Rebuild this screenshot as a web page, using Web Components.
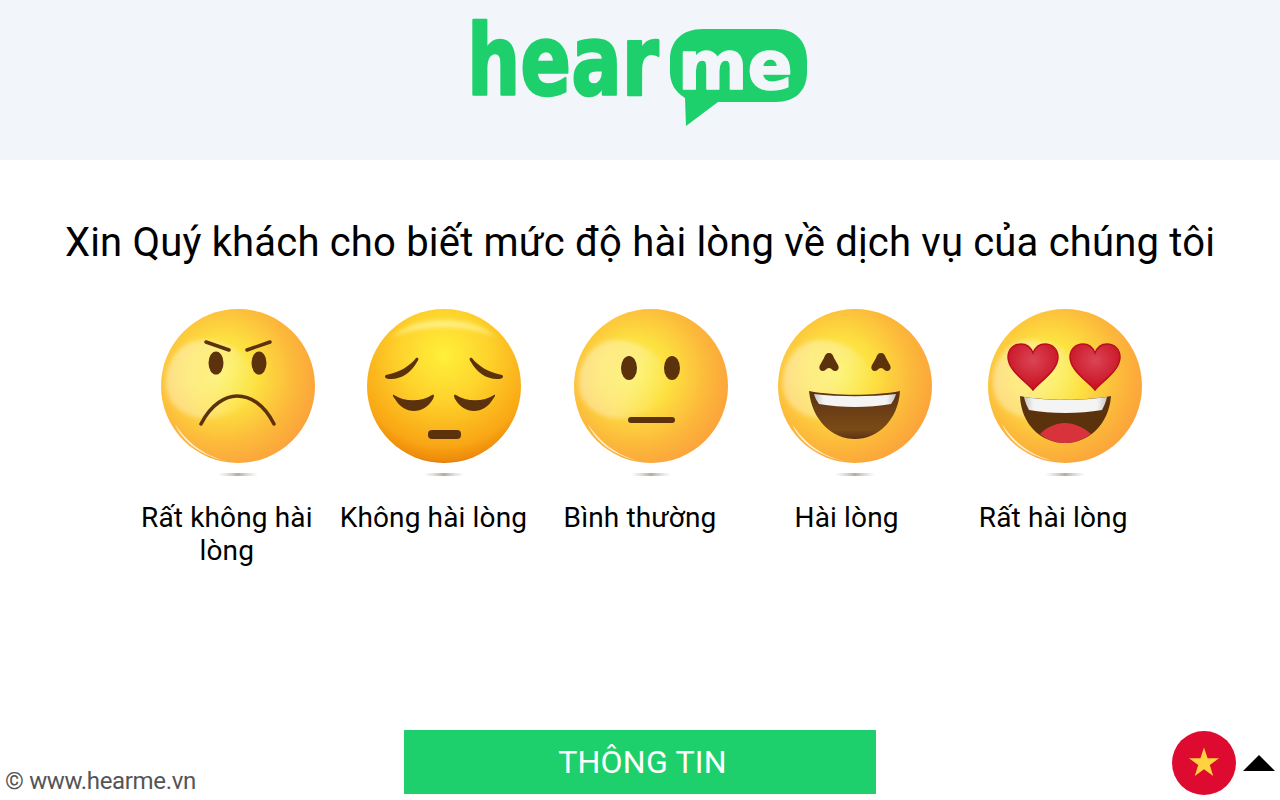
<!DOCTYPE html>
<html lang="vi">
<head>
<meta charset="utf-8">
<title>hearme</title>
<style>
  html, body { margin: 0; height: 100%; background: #fff; }
  body { font-family: Roboto, "Liberation Sans", sans-serif; }
</style>
</head>
<body>
<survey-page>
  <hearme-header slot="header"></hearme-header>
  <span slot="title">Xin Quý khách cho biết mức độ hài lòng về dịch vụ của chúng tôi</span>
  <emoji-item kind="angry" dx="11">Rất không hài lòng</emoji-item>
  <emoji-item kind="sad" dx="11">Không hài lòng</emoji-item>
  <emoji-item kind="neutral" dx="11">Bình thường</emoji-item>
  <emoji-item kind="happy" dx="8">Hài lòng</emoji-item>
  <emoji-item kind="love" dx="12">Rất hài lòng</emoji-item>
  <survey-footer slot="footer"></survey-footer>
</survey-page>

<script>
const INK = "#5b3210";

const page_template = document.createElement('template');
page_template.innerHTML = (`
  <style>
    *, *::before, *::after { box-sizing: border-box; }
    :host {
      display: flex;
      flex-direction: column;
      height: 800px;
      color: #000;
    }
    h1 {
      margin: 56px 0 0;
      height: 54px;
      font: 400 40px/54px Roboto, "Liberation Sans", sans-serif;
      letter-spacing: .19px;
      text-align: center;
    }
    #faces {
      display: grid;
      grid-template-columns: repeat(5, 206.6px);
      justify-content: center;
      margin-top: 30px;
    }
    ::slotted([slot="footer"]) { margin-top: auto; }
  </style>
  <slot name="header"></slot>
  <h1><slot name="title"></slot></h1>
  <div id="faces"><slot></slot></div>
  <slot name="footer"></slot>
`);

class SurveyPage extends HTMLElement {
  connectedCallback () {
    this.attachShadow({mode: "open"}).appendChild(page_template.content.cloneNode(true));
  }
}

const header_template = document.createElement('template');
header_template.innerHTML = (`
  <style>
    :host {
      display: flex;
      justify-content: center;
      height: 160px;
      padding-top: 10px;
      box-sizing: border-box;
      background: #f2f6fb;
    }
    svg { overflow: visible; }
    text {
      font-family: "DejaVu Sans", Inter, sans-serif;
      font-weight: 700;
      stroke-linejoin: round;
    }
  </style>
  <svg width="360" height="130" viewBox="0 0 360 130">
    <text transform="translate(7 85) scale(.765 1)" font-size="98" fill="#1ed06c" stroke="#1ed06c" stroke-width="2.500">hear</text>
    <path fill="#1ed06c" d="M243 19H316C335 19 347 31 347 50V62C347 81 335 92 316 92H258L226 116L225 88C215 82 210 73 210 62V50C210 31 222 19 243 19Z"/>
    <text transform="translate(218 79) scale(.98 1)" font-size="68" fill="#f2f6fb" stroke="#f2f6fb" stroke-width="1.500">me</text>
  </svg>
`);

class HearmeHeader extends HTMLElement {
  connectedCallback () {
    this.attachShadow({mode: "open"}).appendChild(header_template.content.cloneNode(true));
  }
}

// Face artwork, in coordinates around the centre of the face (radius 77)
const eye = (x, y, rx, ry) => `<ellipse cx="${x}" cy="${y}" rx="${rx}" ry="${ry}" fill="${INK}"/>`;
const heart = (x) => `
  <path transform="translate(${x} 0)" fill="url(#heart)" stroke="#b8101e" stroke-width="1.5"
    d="M0 4C-6 -4 -25 -15 -25 -29C-25 -37 -19 -42 -12 -42C-6 -42 -2 -38 0 -33C2 -38 6 -42 12 -42C19 -42 25 -37 25 -29C25 -15 6 -4 0 4Z"/>`;
const caret = (x) => `
  <path transform="translate(${x} 0)" fill="${INK}"
    d="M0 -33C3 -33 4 -31 5 -28L9 -21C11 -17 8 -15 6 -15C3 -15 3 -18 0 -18C-3 -18 -3 -15 -6 -15C-8 -15 -11 -17 -9 -21L-5 -28C-4 -31 -3 -33 0 -33Z"/>`;

const FACES = {
  angry: `
    <path d="M-32 -44L-9 -36M9 -36L32 -44" stroke="${INK}" stroke-width="3.5" stroke-linecap="round" fill="none"/>
    ${eye(-22, -23, 7.5, 11.5)}${eye(21, -23, 7.5, 11.5)}
    <path d="M-37 38C-27 18 -12 10 -1 10C12 10 26 18 36 38" stroke="${INK}" stroke-width="3.500" stroke-linecap="round" fill="none"/>`,
  sad: `
    <path fill="${INK}" d="M-58 -11C-44 -14 -34 -20 -28 -28C-25 -29 -25 -26 -27 -24C-33 -13 -44 -6 -55 -7C-59 -7 -60 -10 -58 -11Z"/>
    <path fill="${INK}" d="M58 -11C44 -14 34 -20 28 -28C25 -29 25 -26 27 -24C33 -13 44 -6 55 -7C59 -7 60 -10 58 -11Z"/>
    <path fill="${INK}" d="M-50 9C-40 16 -22 16 -12 9C-9 8 -10 11 -11 13C-20 29 -40 29 -49 13C-51 11 -52 8 -50 9Z"/>
    <path fill="${INK}" d="M50 9C40 16 22 16 12 9C9 8 10 11 11 13C20 29 40 29 49 13C51 11 52 8 50 9Z"/>
    <rect x="-16" y="44" width="33" height="9" rx="4" fill="${INK}"/>`,
  neutral: `
    ${eye(-22, -18, 8, 12)}${eye(21, -18, 8, 12)}
    <rect x="-23" y="31" width="47" height="6" rx="3" fill="${INK}"/>`,
  happy: `
    ${caret(-26)}${caret(26)}
    <path fill="url(#mouth)" d="M-46 5C-20 10 20 10 45 5C43 35 22 53 0 53C-22 53 -43 35 -46 5Z"/>
    <path fill="url(#teeth)" d="M-41 8C-15 11 15 11 41 8C40 12 38 15 36 18C14 22 -14 22 -36 18C-38 15 -40 12 -41 8Z"/>`,
  love: `
    ${heart(-32)}${heart(30)}
    <path fill="${INK}" d="M-45 10C-20 15 20 15 46 10C44 38 24 57 0 57C-24 57 -44 38 -45 10Z"/>
    <path fill="url(#teeth)" d="M-41 11C-15 15 15 15 42 11C41 16 39 20 37 24C14 28 -14 28 -36 24C-38 20 -40 16 -41 11Z"/>
    <path fill="#d8323e" d="M-25 48C-18 41 -9 37 0 37C9 37 18 41 26 48C18 54 9 57 0 57C-9 57 -18 54 -25 48Z"/>`
};

const item_template = document.createElement('template');
item_template.innerHTML = (`
  <style>
    :host {
      display: flex;
      flex-direction: column;
      align-items: center;
      text-align: center;
      font-size: 28px;
      line-height: 33px;
      letter-spacing: .14px;
    }
    svg { display: block; }
    #label { margin-top: 21px; padding: 0 8px; }
  </style>
  <div id="art"></div>
  <div id="label"><slot></slot></div>
`);

class EmojiItem extends HTMLElement {
  connectedCallback () {
    const shadow = this.attachShadow({mode: "open"});
    shadow.appendChild(item_template.content.cloneNode(true));

    const kind = this.getAttribute("kind");
    const dx = Number(this.getAttribute("dx"));
    const skin = (kind === "sad") ? `
      <radialGradient id="skin" cx="50%" cy="30%" r="72%">
        <stop offset="0" stop-color="#fff03a"/>
        <stop offset=".4" stop-color="#fed32c"/>
        <stop offset=".82" stop-color="#f9a614"/>
        <stop offset=".95" stop-color="#ee8a0a"/>
        <stop offset="1" stop-color="#c85e06"/>
      </radialGradient>` : `
      <radialGradient id="skin" cx="40%" cy="42%" r="66%">
        <stop offset="0" stop-color="#fbf04e"/>
        <stop offset=".35" stop-color="#fde040"/>
        <stop offset=".7" stop-color="#fcb93a"/>
        <stop offset="1" stop-color="#fb9f3b"/>
      </radialGradient>`;
    const gloss = (kind === "sad") ? `
      <path d="M-52 -48C-30 -72 30 -72 52 -48C30 -62 -30 -62 -52 -48Z" fill="#fff6a0" opacity=".7"/>` : `
      <path d="M-72 -3C-72 -28 -55 -46 -35 -46C-10 -46 14 -30 18 -6C22 14 -10 36 -40 32C-58 28 -72 16 -72 -3Z" fill="url(#gloss)"/>`;
    const rim = (kind === "sad") ? "" : `
      <path d="M-63 38C-52 55 -35 70 -10 75C-32 72 -55 58 -63 38Z" fill="#fff" opacity=".75"/>`;

    shadow.getElementById("art").innerHTML = (`
      <svg width="206" height="180" viewBox="0 0 206 180">
        <defs>
          ${skin}
          <linearGradient id="gloss" x1="0" y1=".3" x2="1" y2=".6">
            <stop offset="0" stop-color="#fff" stop-opacity=".4"/>
            <stop offset=".55" stop-color="#fff" stop-opacity=".3"/>
            <stop offset="1" stop-color="#fff" stop-opacity="0"/>
          </linearGradient>
          <linearGradient id="mouth" x1="0" y1="0" x2="0" y2="1">
            <stop offset="0" stop-color="#5b3210"/>
            <stop offset=".8" stop-color="#7a4a16"/>
            <stop offset="1" stop-color="#5b3210"/>
          </linearGradient>
          <linearGradient id="teeth" x1="0" y1="0" x2="1" y2="0">
            <stop offset="0" stop-color="#c8c8c8"/>
            <stop offset=".12" stop-color="#f4f4f4"/>
            <stop offset=".88" stop-color="#f4f4f4"/>
            <stop offset="1" stop-color="#c8c8c8"/>
          </linearGradient>
          <radialGradient id="heart" cx="50%" cy="35%" r="65%">
            <stop offset="0" stop-color="#da4556"/>
            <stop offset="1" stop-color="#c80f1e"/>
          </radialGradient>
          <linearGradient id="ground" x1="0" y1="0" x2="1" y2="0">
            <stop offset="0" stop-color="#cfc8c0" stop-opacity="0"/>
            <stop offset=".5" stop-color="#b5aba0"/>
            <stop offset="1" stop-color="#cfc8c0" stop-opacity="0"/>
          </linearGradient>
          <filter id="soft" x="-10%" y="-10%" width="120%" height="120%"><feGaussianBlur stdDeviation=".5"/></filter>
          <filter id="softer" x="-20%" y="-20%" width="140%" height="140%"><feGaussianBlur stdDeviation="2"/></filter>
          <clipPath id="round"><circle r="77"/></clipPath>
        </defs>
        <g transform="translate(${103 + dx} 86)" filter="url(#soft)">
          <circle r="77" fill="url(#skin)"/>
          <g filter="url(#softer)" clip-path="url(#round)">${gloss}</g>
          ${rim}
          ${FACES[kind]}
          <rect x="-20" y="87" width="40" height="3" fill="url(#ground)"/>
        </g>
      </svg>
    `);
  }
}

const footer_template = document.createElement('template');
footer_template.innerHTML = (`
  <style>
    *, *::before, *::after { box-sizing: border-box; }
    :host {
      display: grid;
      grid-template-columns: 1fr 472px 1fr;
      height: 65px;
      margin-bottom: 5px;
    }
    #site {
      align-self: end;
      padding-left: 5px;
      font-size: 24px;
      line-height: 28px;
      letter-spacing: -.33px;
      color: #555;
    }
    button {
      display: block;
      height: 64px;
      padding: 0 0 0 5px;
      border: 0;
      background: #1ed06c;
      color: #fff;
      font: 400 32px Roboto, "Liberation Sans", sans-serif;
      letter-spacing: .25px;
    }
    #right {
      display: flex;
      justify-content: flex-end;
      align-items: center;
      gap: 7px;
      padding-right: 5px;
    }
  </style>
  <div id="site">© www.hearme.vn</div>
  <button type="button">THÔNG TIN</button>
  <div id="right">
    <svg width="64" height="64" viewBox="-32 -32 64 64">
      <circle r="32" fill="#de0a30"/>
      <path fill="#ffd23f" d="M0 -15.500L3.600 -4.800H15L5.800 2L9.200 13L0 6.300L-9.200 13L-5.800 2L-15 -4.800H-3.600Z"/>
    </svg>
    <svg width="32" height="16" viewBox="0 0 32 16"><path d="M16 0L32 16H0Z"/></svg>
  </div>
`);

class SurveyFooter extends HTMLElement {
  connectedCallback () {
    this.attachShadow({mode: "open"}).appendChild(footer_template.content.cloneNode(true));
  }
}

customElements.define("survey-page", SurveyPage);
customElements.define("hearme-header", HearmeHeader);
customElements.define("emoji-item", EmojiItem);
customElements.define("survey-footer", SurveyFooter);
</script>
</body>
</html>
